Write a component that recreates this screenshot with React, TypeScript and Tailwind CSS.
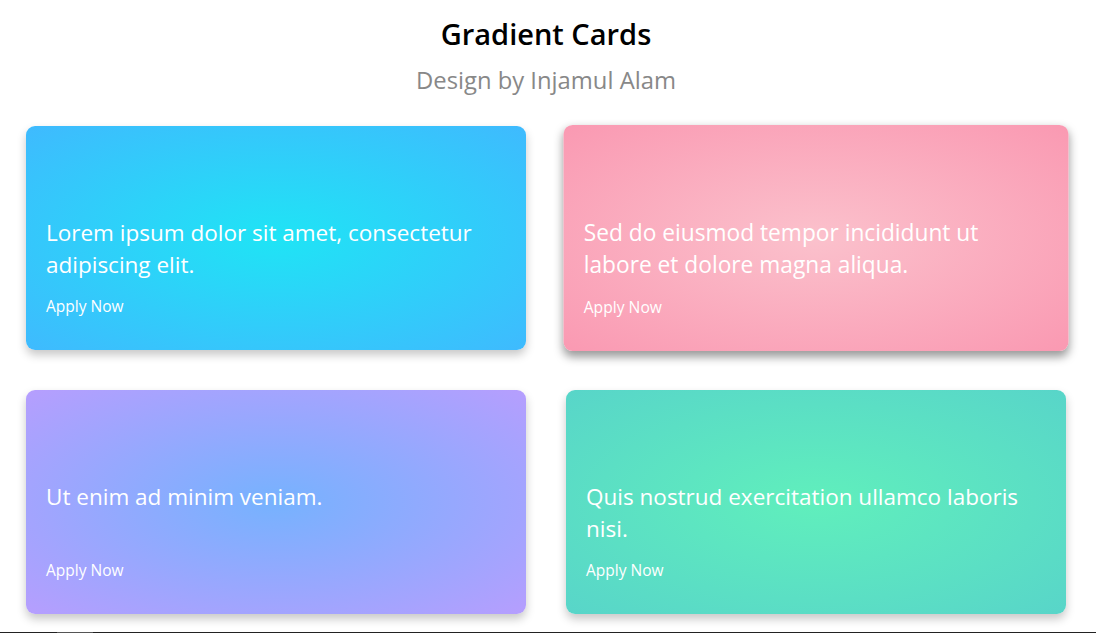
import React from "react";

const cards = [
  {
    text: "Lorem ipsum dolor sit amet, consectetur adipiscing elit.",
    bg: "bg-[radial-gradient(#1fe4f5,#3fbafe)]",
    extra: "shadow-[0_5px_10px_rgba(0,0,0,0.22)]",
  },
  {
    text: "Sed do eiusmod tempor incididunt ut labore et dolore magna aliqua.",
    bg: "bg-[radial-gradient(#fbc1cc,#fa99b2)]",
    extra: "scale-[1.01] shadow-[0_5px_10px_rgba(0,0,0,0.4)]",
  },
  {
    text: "Ut enim ad minim veniam.",
    bg: "bg-[radial-gradient(#76b2fe,#b69efe)]",
    extra: "shadow-[0_5px_10px_rgba(0,0,0,0.22)]",
  },
  {
    text: "Quis nostrud exercitation ullamco laboris nisi.",
    bg: "bg-[radial-gradient(#60efbc,#58d5c9)]",
    extra: "shadow-[0_5px_10px_rgba(0,0,0,0.22)]",
  },
];

export default function App() {
  return (
    <div className="min-h-screen flex flex-col bg-white font-['Open_Sans',sans-serif]">
      <div className="flex-1 w-[1092px]">
        <header className="flex flex-col items-center pt-[14px]">
          <h1 className="text-[29px] leading-[40px] font-semibold text-black">Gradient Cards</h1>
          <p className="mt-[10px] text-[23.8px] leading-[32px] text-[#888888]">Design by Injamul Alam</p>
        </header>
        <div className="grid grid-cols-[500px_500px] gap-x-10 gap-y-10 justify-center mt-[30px]">
          {cards.map((c, i) => (
            <div
              key={i}
              className={`h-[224px] rounded-[9px] px-5 pt-[91px] flex flex-col text-white ${c.bg} ${c.extra}`}
            >
              <p className="h-[64px] text-[22.5px] leading-[32px]">{c.text}</p>
              <span className="mt-[13px] text-[15.5px] leading-[24px]">Apply Now</span>
            </div>
          ))}
        </div>
      </div>
      <div className="h-px bg-[#222] flex">
        <div className="w-[36px] ml-[57px] bg-[#555]" />
      </div>
    </div>
  );
}
